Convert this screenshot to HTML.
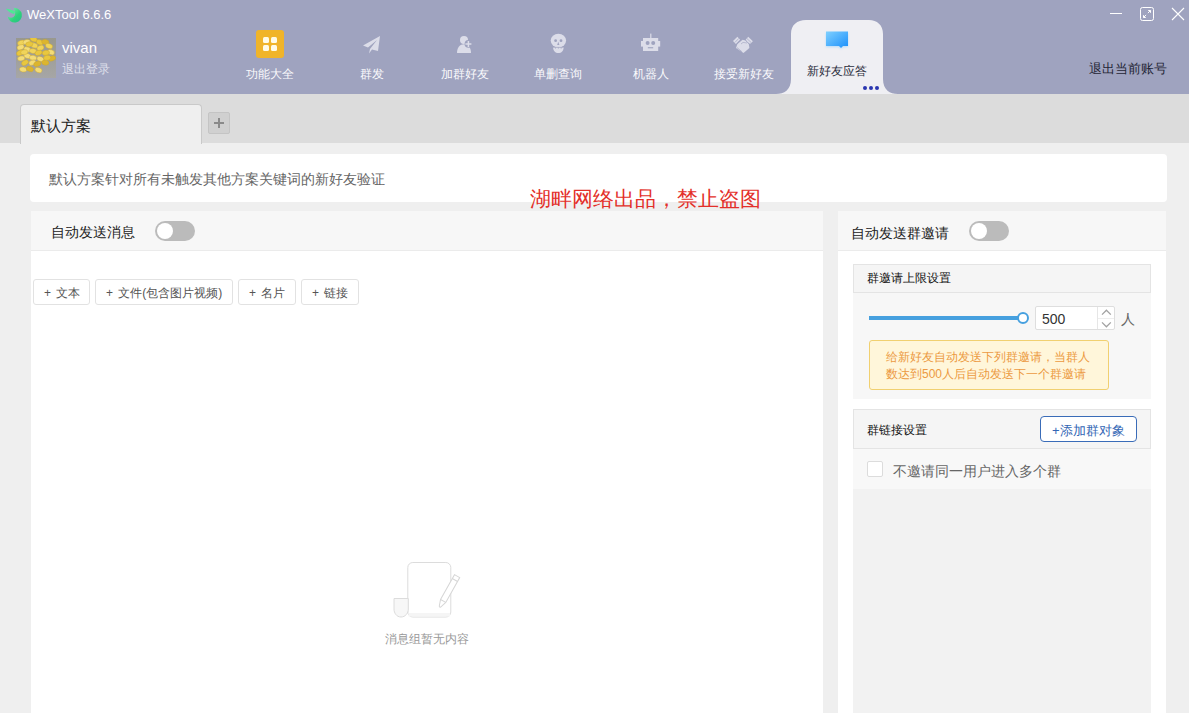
<!DOCTYPE html>
<html><head><meta charset="utf-8">
<style>
*{margin:0;padding:0;box-sizing:border-box}
html,body{width:1189px;height:713px;overflow:hidden;background:#efefef;font-family:"Liberation Sans",sans-serif;position:relative}
.a{position:absolute}
.t{position:absolute;white-space:nowrap;line-height:1}
#hdr{left:0;top:0;width:1189px;height:94px;background:#9fa3bf}
#tabbar{left:0;top:94px;width:1189px;height:49px;background:#dcdcdc}
.nav{position:absolute;top:68px;font-size:12px;color:#fafafc;line-height:12px;text-align:center;width:93px;margin-left:-46.5px}
</style></head>
<body>
<div id="hdr" class="a"></div>
<!-- title -->
<svg class="a" style="left:3px;top:5px" width="22" height="20" viewBox="0 0 22 20">
 <defs><linearGradient id="lg" x1="0" y1="0" x2="1" y2="1"><stop offset="0" stop-color="#7ef0b0"/><stop offset="0.6" stop-color="#2fd27a"/><stop offset="1" stop-color="#25c08a"/></linearGradient></defs>
 <path d="M10.5 3.2 A7.2 7.2 0 1 1 4.6 11.5 C7 13.2 10.2 13 11.6 10.8 C12.6 9 12.4 5.5 10.5 3.2 Z" fill="url(#lg)"/>
 <path d="M2.8 3.8 C6 4 10 5 12.3 6.6 L11 9.3 C8 8.3 5 6.5 2.8 3.8 Z" fill="#4fe895"/>
</svg>
<div class="t" style="left:27px;top:8px;font-size:13px;color:#fff">WeXTool 6.6.6</div>
<!-- avatar -->
<svg class="a" style="left:16px;top:38px" width="40" height="40" viewBox="0 0 40 40"><defs><linearGradient id="avg" x1="0" y1="0" x2="0" y2="1"><stop offset="0" stop-color="#98988f"/><stop offset="1" stop-color="#a6a6a6"/></linearGradient></defs><rect width="40" height="40" fill="url(#avg)"/><ellipse cx="5.2" cy="4.9" rx="3.7" ry="2.5" stroke="#c9a530" stroke-width="0.4" transform="rotate(-20 5.2 4.9)" fill="#f0d45a"/><ellipse cx="10.8" cy="4.0" rx="3.7" ry="2.5" stroke="#c9a530" stroke-width="0.4" transform="rotate(-10 10.8 4.0)" fill="#f3dc78"/><ellipse cx="17.6" cy="1.2" rx="3.7" ry="2.5" stroke="#c9a530" stroke-width="0.4" transform="rotate(20 17.6 1.2)" fill="#e9c73e"/><ellipse cx="23.8" cy="4.3" rx="3.7" ry="2.5" stroke="#c9a530" stroke-width="0.4" transform="rotate(20 23.8 4.3)" fill="#e9c73e"/><ellipse cx="29.3" cy="4.0" rx="3.7" ry="2.5" stroke="#c9a530" stroke-width="0.4" transform="rotate(10 29.3 4.0)" fill="#dcb52e"/><ellipse cx="33.0" cy="8.0" rx="3.7" ry="2.5" stroke="#c9a530" stroke-width="0.4" transform="rotate(20 33.0 8.0)" fill="#f0d45a"/><ellipse cx="4.6" cy="9.3" rx="3.7" ry="2.5" stroke="#c9a530" stroke-width="0.4" transform="rotate(-20 4.6 9.3)" fill="#f3dc78"/><ellipse cx="11.4" cy="11.4" rx="3.7" ry="2.5" stroke="#c9a530" stroke-width="0.4" transform="rotate(20 11.4 11.4)" fill="#f3dc78"/><ellipse cx="17.0" cy="13.0" rx="3.7" ry="2.5" stroke="#c9a530" stroke-width="0.4" transform="rotate(10 17.0 13.0)" fill="#f0d45a"/><ellipse cx="24.4" cy="9.9" rx="3.7" ry="2.5" stroke="#c9a530" stroke-width="0.4" transform="rotate(-20 24.4 9.9)" fill="#f0d45a"/><ellipse cx="34.9" cy="14.2" rx="3.7" ry="2.5" stroke="#c9a530" stroke-width="0.4" transform="rotate(20 34.9 14.2)" fill="#f3dc78"/><ellipse cx="4.0" cy="14.8" rx="3.7" ry="2.5" stroke="#c9a530" stroke-width="0.4" transform="rotate(-30 4.0 14.8)" fill="#e9c73e"/><ellipse cx="22.5" cy="14.8" rx="3.7" ry="2.5" stroke="#c9a530" stroke-width="0.4" transform="rotate(-20 22.5 14.8)" fill="#e9c73e"/><ellipse cx="29.9" cy="14.8" rx="3.7" ry="2.5" stroke="#c9a530" stroke-width="0.4" transform="rotate(-10 29.9 14.8)" fill="#e9c73e"/><ellipse cx="5.2" cy="20.4" rx="3.7" ry="2.5" stroke="#c9a530" stroke-width="0.4" transform="rotate(-10 5.2 20.4)" fill="#f3dc78"/><ellipse cx="11.4" cy="17.9" rx="3.7" ry="2.5" stroke="#c9a530" stroke-width="0.4" transform="rotate(20 11.4 17.9)" fill="#f3dc78"/><ellipse cx="17.0" cy="19.8" rx="3.7" ry="2.5" stroke="#c9a530" stroke-width="0.4" transform="rotate(10 17.0 19.8)" fill="#f3dc78"/><ellipse cx="24.4" cy="21.0" rx="3.7" ry="2.5" stroke="#c9a530" stroke-width="0.4" transform="rotate(20 24.4 21.0)" fill="#f3dc78"/><ellipse cx="36.1" cy="20.4" rx="3.7" ry="2.5" stroke="#c9a530" stroke-width="0.4" transform="rotate(-20 36.1 20.4)" fill="#dcb52e"/><ellipse cx="9.0" cy="24.7" rx="3.7" ry="2.5" stroke="#c9a530" stroke-width="0.4" transform="rotate(-30 9.0 24.7)" fill="#e9c73e"/><ellipse cx="16.4" cy="24.7" rx="3.7" ry="2.5" stroke="#c9a530" stroke-width="0.4" transform="rotate(-20 16.4 24.7)" fill="#f3dc78"/><ellipse cx="21.3" cy="25.9" rx="3.7" ry="2.5" stroke="#c9a530" stroke-width="0.4" transform="rotate(-20 21.3 25.9)" fill="#dcb52e"/><ellipse cx="29.3" cy="24.7" rx="3.7" ry="2.5" stroke="#c9a530" stroke-width="0.4" transform="rotate(10 29.3 24.7)" fill="#dcb52e"/><ellipse cx="7.1" cy="31.5" rx="3.7" ry="2.5" stroke="#c9a530" stroke-width="0.4" transform="rotate(10 7.1 31.5)" fill="#f3dc78"/><ellipse cx="13.9" cy="30.9" rx="3.7" ry="2.5" stroke="#c9a530" stroke-width="0.4" transform="rotate(20 13.9 30.9)" fill="#dcb52e"/><ellipse cx="22.5" cy="32.1" rx="3.7" ry="2.5" stroke="#c9a530" stroke-width="0.4" transform="rotate(20 22.5 32.1)" fill="#f3dc78"/><ellipse cx="18.2" cy="7.4" rx="3.7" ry="2.5" stroke="#c9a530" stroke-width="0.4" transform="rotate(20 18.2 7.4)" fill="#f0d45a"/><ellipse cx="13.3" cy="6.2" rx="3.7" ry="2.5" stroke="#c9a530" stroke-width="0.4" transform="rotate(-10 13.3 6.2)" fill="#e9c73e"/><ellipse cx="8.3" cy="14.2" rx="3.7" ry="2.5" stroke="#c9a530" stroke-width="0.4" transform="rotate(-10 8.3 14.2)" fill="#f0d45a"/><ellipse cx="31.2" cy="19.8" rx="3.7" ry="2.5" stroke="#c9a530" stroke-width="0.4" transform="rotate(-10 31.2 19.8)" fill="#e9c73e"/></svg>
<div class="t" style="left:62px;top:40px;font-size:15px;color:#fff">vivan</div>
<div class="t" style="left:62px;top:63px;font-size:12px;color:#dfe0ec">退出登录</div>

<!-- nav -->
<div class="a" style="left:256px;top:30px;width:28px;height:28px;background:#f0b429;border-radius:3px"></div>
<div class="a" style="left:263px;top:37px;width:6px;height:6px;background:#fffbe6;border-radius:1.5px"></div>
<div class="a" style="left:271px;top:37px;width:6px;height:6px;background:#fffbe6;border-radius:1.5px"></div>
<div class="a" style="left:263px;top:45px;width:6px;height:6px;background:#fffbe6;border-radius:1.5px"></div>
<div class="a" style="left:271px;top:45px;width:6px;height:6px;background:#fffbe6;border-radius:1.5px"></div>
<div class="nav" style="left:270px">功能大全</div>

<svg class="a" style="left:360px;top:33px" width="24" height="24" viewBox="0 0 24 24"><path d="M20 3 L3 12.5 L8 14.5 L17 7 L10 16 L9 20.5 L12 16.5 L18 18 Z" fill="#dcdde9"/></svg>
<div class="nav" style="left:372px">群发</div>

<svg class="a" style="left:452px;top:33px" width="24" height="24" viewBox="0 0 24 24">
 <circle cx="12" cy="7" r="4" fill="#dcdde9"/>
 <path d="M5 20 C5 14.5 8 11.2 12 11.2 C16 11.2 19 14.5 19 20 Z" fill="#dcdde9"/>
 <circle cx="16.4" cy="10.9" r="3.8" fill="#9fa3bf"/>
 <path d="M16.4 7.9 V13.9 M13.4 10.9 H19.4" stroke="#dcdde9" stroke-width="1.5"/>
</svg>
<div class="nav" style="left:465px">加群好友</div>

<svg class="a" style="left:546px;top:32px" width="24" height="24" viewBox="0 0 24 24">
 <ellipse cx="12.4" cy="8.6" rx="7.7" ry="6.8" fill="#dcdde9"/>
 <path d="M7 15 H17.7 C17.5 19 15.5 21 12.4 21 C9.3 21 7.2 19 7 15 Z" fill="#dcdde9"/>
 <circle cx="9.6" cy="8.7" r="1.4" fill="#9fa3bf"/>
 <circle cx="15" cy="8.7" r="1.4" fill="#9fa3bf"/>
 <path d="M12.3 9.8 L11.2 13 H13.4 Z" fill="#9fa3bf"/>
 <path d="M7 15.4 H17.8" stroke="#9fa3bf" stroke-width="0.7"/>
 <path d="M9.5 15.4 V16.6 M12.4 15.4 V16.6 M15.2 15.4 V16.6" stroke="#9fa3bf" stroke-width="0.7"/>
</svg>
<div class="nav" style="left:558px">单删查询</div>

<svg class="a" style="left:639px;top:32px" width="24" height="24" viewBox="0 0 24 24">
 <rect x="11.2" y="1.6" width="1.2" height="5" fill="#dcdde9"/>
 <rect x="4" y="6" width="15.2" height="13" fill="#dcdde9"/>
 <rect x="2" y="9" width="2.2" height="5.6" fill="#dcdde9"/>
 <rect x="19" y="9" width="2.2" height="5.6" fill="#dcdde9"/>
 <circle cx="8.6" cy="10.9" r="2" fill="#9fa3bf"/>
 <circle cx="14.2" cy="10.9" r="2" fill="#9fa3bf"/>
 <rect x="8.8" y="15.2" width="5.4" height="1.1" fill="#9fa3bf"/>
</svg>
<div class="nav" style="left:651px">机器人</div>

<svg class="a" style="left:732px;top:33px" width="24" height="24" viewBox="0 0 24 24">
 <path d="M1 8 L5.4 3.8 L8.1 6.7 L3.9 10.9 Z" fill="#dcdde9"/>
 <path d="M20.9 8.2 L16.2 3.8 L13.7 6.7 L17.9 11.1 Z" fill="#dcdde9"/>
 <path d="M5.4 11.1 L10.6 6.7 L16.4 8.2 L17.4 15.1 L11.5 20 L4 15 Z" fill="#dcdde9"/>
 <path d="M3 9.4 L6.8 5.4 M19 9.4 L15 5.6" stroke="#a9acc6" stroke-width="0.8"/>
 <path d="M4.4 11.6 L8.4 7.2 M17.6 11.4 L13.6 7.4" stroke="#9fa3bf" stroke-width="0.9"/>
 <path d="M9 11 L11 9.4 L15 10" stroke="#a9acc6" stroke-width="0.7" fill="none"/>
 <path d="M5 14.6 L10 18.8" stroke="#a9acc6" stroke-width="0.8"/>
</svg>
<div class="nav" style="left:744px">接受新好友</div>

<!-- active tab -->
<svg class="a" style="left:776px;top:19px" width="122" height="75" viewBox="0 0 122 75">
 <path d="M0 75 C8 75 15 71 15 60 L15 15 C15 6 21 1 30 1 L93 1 C101 1 107 6 107 15 L107 60 C107 71 114 75 122 75 Z" fill="#efeff3"/>
</svg>
<svg class="a" style="left:822px;top:28px" width="30" height="26" viewBox="0 0 30 26">
 <defs><linearGradient id="bg1" x1="0" y1="0" x2="1" y2="1"><stop offset="0" stop-color="#7fd0ff"/><stop offset="1" stop-color="#1a8ffb"/></linearGradient>
 <filter id="gl" x="-30%" y="-30%" width="160%" height="160%"><feGaussianBlur stdDeviation="1"/></filter></defs>
 <path d="M4 4 H26 V18 H21 L19 20 L17 18 H4 Z" fill="#7cc8ff" opacity="0.5" filter="url(#gl)" transform="translate(0,1)"/>
 <path d="M4 3.5 H26 V18 H21 L19 20 L17 18 H4 Z" fill="url(#bg1)"/>
</svg>
<div class="t" style="left:807px;top:65px;font-size:12px;color:#2c2e3e">新好友应答</div>
<div class="a" style="left:863px;top:86px;width:4px;height:4px;border-radius:50%;background:#2a36b0"></div>
<div class="a" style="left:869px;top:86px;width:4px;height:4px;border-radius:50%;background:#2a36b0"></div>
<div class="a" style="left:875px;top:86px;width:4px;height:4px;border-radius:50%;background:#2a36b0"></div>

<!-- window controls -->
<div class="a" style="left:1110px;top:13px;width:12px;height:1px;background:#fff"></div>
<svg class="a" style="left:1139px;top:6px" width="16" height="16" viewBox="0 0 16 16">
 <rect x="1.5" y="1.5" width="13" height="13" rx="2" fill="none" stroke="#fff" stroke-width="1"/>
 <path d="M9.2 4.5 H11.5 V6.8 M11.5 4.5 L8.9 7.1 M6.8 11.5 H4.5 V9.2 M4.5 11.5 L7.1 8.9" stroke="#fff" stroke-width="1" fill="none"/>
</svg>
<svg class="a" style="left:1170px;top:6px" width="16" height="16" viewBox="0 0 16 16">
 <path d="M2 2 L14 14 M14 2 L2 14" stroke="#fff" stroke-width="1.1"/>
</svg>
<div class="t" style="left:1089px;top:62px;font-size:13px;color:#1f2535">退出当前账号</div>

<!-- tab bar -->
<div id="tabbar" class="a"></div>
<div class="a" style="left:20px;top:104px;width:182px;height:40px;background:#efefef;border:1px solid #c9c9c9;border-bottom:none;border-radius:4px 4px 0 0"></div>
<div class="t" style="left:31px;top:118px;font-size:15px;color:#222">默认方案</div>
<div class="a" style="left:208px;top:112px;width:22px;height:22px;background:#d0d0d0;border:1px solid #c4c4c4;border-radius:2px"></div>
<div class="a" style="left:214px;top:122px;width:10px;height:2px;background:#8a8a8a"></div>
<div class="a" style="left:218px;top:118px;width:2px;height:10px;background:#8a8a8a"></div>

<!-- description card -->
<div class="a" style="left:30px;top:154px;width:1137px;height:48px;background:#fff;border-radius:4px"></div>
<div class="t" style="left:49px;top:172px;font-size:14px;color:#666">默认方案针对所有未触发其他方案关键词的新好友验证</div>
<div class="t" style="left:530px;top:188px;font-size:21px;color:#e3302a">湖畔网络出品，禁止盗图</div>

<!-- left panel -->
<div class="a" style="left:31px;top:211px;width:792px;height:502px;background:#fff"></div>
<div class="a" style="left:31px;top:211px;width:792px;height:40px;background:#f7f7f7;border-bottom:1px solid #ebebeb"></div>
<div class="t" style="left:51px;top:225px;font-size:14px;color:#222">自动发送消息</div>
<div class="a" style="left:155px;top:221px;width:40px;height:20px;border-radius:10px;background:#bbb"></div>
<div class="a" style="left:157px;top:223px;width:16px;height:16px;border-radius:50%;background:#fff"></div>

<div class="a" style="left:33px;top:279px;width:57px;height:26px;border:1px solid #e2e2e2;border-radius:3px;background:#fff"></div>
<div class="t" style="left:44px;top:287px;font-size:12px;color:#555;word-spacing:2px">+ 文本</div>
<div class="a" style="left:95px;top:279px;width:138px;height:26px;border:1px solid #e2e2e2;border-radius:3px;background:#fff"></div>
<div class="t" style="left:106px;top:287px;font-size:12px;color:#555;word-spacing:2px">+ 文件(包含图片视频)</div>
<div class="a" style="left:238px;top:279px;width:58px;height:26px;border:1px solid #e2e2e2;border-radius:3px;background:#fff"></div>
<div class="t" style="left:249px;top:287px;font-size:12px;color:#555;word-spacing:2px">+ 名片</div>
<div class="a" style="left:301px;top:279px;width:58px;height:26px;border:1px solid #e2e2e2;border-radius:3px;background:#fff"></div>
<div class="t" style="left:312px;top:287px;font-size:12px;color:#555;word-spacing:2px">+ 链接</div>

<!-- empty icon -->
<svg class="a" style="left:390px;top:558px" width="80" height="64" viewBox="0 0 80 64">
 <rect x="17.8" y="4.5" width="43" height="54.5" rx="5" fill="#fff" stroke="#dcdcdc" stroke-width="1"/>
 <rect x="18.5" y="55" width="41.6" height="3.5" fill="#f5f5f5"/>
 <path d="M4 40.5 H18.3 V51 C18.3 55 15.5 59 11 59 C6.5 59 4 55 4 51 Z" fill="#f7f7f7" stroke="#dcdcdc" stroke-width="1"/>
 <g transform="translate(67.1,18.1) rotate(29.3)">
  <path d="M-3 0 H3 V28.5 L0.8 35 Q0 36 -0.8 35 L-3 28.5 Z" fill="#fff" stroke="#d6d6d6" stroke-width="1"/>
  <path d="M-3 4.5 H3 M-3 28.5 H3" stroke="#d6d6d6" stroke-width="1"/>
 </g>
</svg>
<div class="t" style="left:385px;top:633px;font-size:12px;color:#999">消息组暂无内容</div>

<!-- right panel -->
<div class="a" style="left:838px;top:211px;width:328px;height:502px;background:#fff"></div>
<div class="a" style="left:838px;top:211px;width:328px;height:40px;background:#f7f7f7;border-bottom:1px solid #ebebeb"></div>
<div class="t" style="left:851px;top:226px;font-size:14px;color:#222">自动发送群邀请</div>
<div class="a" style="left:969px;top:221px;width:40px;height:20px;border-radius:10px;background:#bbb"></div>
<div class="a" style="left:971px;top:223px;width:16px;height:16px;border-radius:50%;background:#fff"></div>

<div class="a" style="left:853px;top:264px;width:298px;height:135px;background:#f7f7f7"></div>
<div class="a" style="left:853px;top:264px;width:298px;height:29px;background:#f5f5f5;border:1px solid #e4e4e4"></div>
<div class="t" style="left:867px;top:272px;font-size:12px;color:#111">群邀请上限设置</div>
<div class="a" style="left:869px;top:316px;width:150px;height:4px;background:#46a0df"></div>
<div class="a" style="left:1017px;top:312px;width:12px;height:12px;border-radius:50%;background:#fff;border:2px solid #46a0df"></div>
<div class="a" style="left:1035px;top:306px;width:80px;height:24px;background:#fff;border:1px solid #dedede;border-radius:2px"></div>
<div class="a" style="left:1097px;top:307px;width:1px;height:22px;background:#e6e6e6"></div>
<div class="a" style="left:1098px;top:318px;width:16px;height:1px;background:#eee"></div>
<svg class="a" style="left:1098px;top:307px" width="16" height="22" viewBox="0 0 16 22">
 <path d="M4 7.6 L8.4 3.2 L12.8 7.6 M4 15.4 L8.4 19.8 L12.8 15.4" stroke="#a2a2a2" stroke-width="1.3" fill="none"/>
</svg>
<div class="t" style="left:1042px;top:312px;font-size:14px;color:#333">500</div>
<div class="t" style="left:1121px;top:312px;font-size:14px;color:#666">人</div>
<div class="a" style="left:869px;top:340px;width:240px;height:50px;background:#fff6da;border:1px solid #f1d070;border-radius:3px"></div>
<div class="t" style="left:886px;top:351px;font-size:12px;color:#ec9a42">给新好友自动发送下列群邀请，当群人</div>
<div class="t" style="left:886px;top:368px;font-size:12px;color:#ec9a42">数达到500人后自动发送下一个群邀请</div>

<div class="a" style="left:853px;top:409px;width:298px;height:304px;background:#f2f2f2"></div>
<div class="a" style="left:853px;top:409px;width:298px;height:40px;background:#f5f5f5;border:1px solid #e4e4e4"></div>
<div class="a" style="left:853px;top:449px;width:298px;height:40px;background:#f8f8f8"></div>
<div class="t" style="left:867px;top:424px;font-size:12px;color:#111">群链接设置</div>
<div class="a" style="left:1040px;top:416px;width:97px;height:26px;background:#fff;border:1px solid #3a6cb8;border-radius:4px"></div>
<div class="t" style="left:1052px;top:424px;font-size:13px;color:#3467b5">+添加群对象</div>
<div class="a" style="left:867px;top:461px;width:16px;height:16px;background:#fff;border:1px solid #dcdcdc;border-radius:2px"></div>
<div class="t" style="left:893px;top:464px;font-size:14px;color:#666">不邀请同一用户进入多个群</div>
</body></html>
